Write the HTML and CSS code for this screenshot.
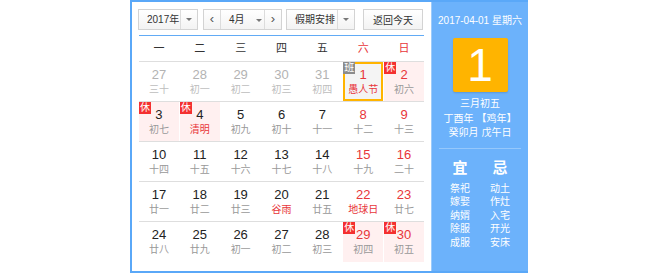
FILE: index.html
```html
<!DOCTYPE html>
<html lang="zh-CN">
<head>
    <meta charset="UTF-8">
    <meta name="viewport" content="width=device-width, initial-scale=1.0">
    <title>万年历</title>
    <link rel="stylesheet" href="styles.css">
</head>
<body>
    <div class="calendar">
        <div class="main">
            <div class="toolbar">
                <div class="select year">
                    <span class="select-text">2017年</span>
                    <span class="select-arrow"><i class="caret"></i></span>
                </div>
                <div class="month-group">
                    <span class="month-btn">&lsaquo;</span>
                    <span class="month-select">4月 <i class="caret"></i></span>
                    <span class="month-btn">&rsaquo;</span>
                </div>
                <div class="select holiday">
                    <span class="select-text">假期安排</span>
                    <span class="select-arrow"><i class="caret"></i></span>
                </div>
                <button class="today-btn">返回今天</button>
            </div>

            <div class="week-head">
                <span>一</span><span>二</span><span>三</span><span>四</span><span>五</span>
                <span class="red">六</span><span class="red">日</span>
            </div>

            <div class="days">
                <div class="week">
                    <div class="day other"><b>27</b><em>三十</em></div>
                    <div class="day other"><b>28</b><em>初一</em></div>
                    <div class="day other"><b>29</b><em>初二</em></div>
                    <div class="day other"><b>30</b><em>初三</em></div>
                    <div class="day other"><b>31</b><em>初四</em></div>
                    <div class="day today weekend"><i class="tag work">班</i><b>1</b><em class="fest">愚人节</em></div>
                    <div class="day rest weekend"><i class="tag">休</i><b>2</b><em>初六</em></div>
                </div>
                <div class="week">
                    <div class="day rest"><i class="tag">休</i><b>3</b><em>初七</em></div>
                    <div class="day rest"><i class="tag">休</i><b>4</b><em class="fest">清明</em></div>
                    <div class="day"><b>5</b><em>初九</em></div>
                    <div class="day"><b>6</b><em>初十</em></div>
                    <div class="day"><b>7</b><em>十一</em></div>
                    <div class="day weekend"><b>8</b><em>十二</em></div>
                    <div class="day weekend"><b>9</b><em>十三</em></div>
                </div>
                <div class="week">
                    <div class="day"><b>10</b><em>十四</em></div>
                    <div class="day"><b>11</b><em>十五</em></div>
                    <div class="day"><b>12</b><em>十六</em></div>
                    <div class="day"><b>13</b><em>十七</em></div>
                    <div class="day"><b>14</b><em>十八</em></div>
                    <div class="day weekend"><b>15</b><em>十九</em></div>
                    <div class="day weekend"><b>16</b><em>二十</em></div>
                </div>
                <div class="week">
                    <div class="day"><b>17</b><em>廿一</em></div>
                    <div class="day"><b>18</b><em>廿二</em></div>
                    <div class="day"><b>19</b><em>廿三</em></div>
                    <div class="day"><b>20</b><em class="fest">谷雨</em></div>
                    <div class="day"><b>21</b><em>廿五</em></div>
                    <div class="day weekend"><b>22</b><em class="fest">地球日</em></div>
                    <div class="day weekend"><b>23</b><em>廿七</em></div>
                </div>
                <div class="week last">
                    <div class="day"><b>24</b><em>廿八</em></div>
                    <div class="day"><b>25</b><em>廿九</em></div>
                    <div class="day"><b>26</b><em>初一</em></div>
                    <div class="day"><b>27</b><em>初二</em></div>
                    <div class="day"><b>28</b><em>初三</em></div>
                    <div class="day rest weekend"><i class="tag">休</i><b>29</b><em>初四</em></div>
                    <div class="day rest weekend"><i class="tag">休</i><b>30</b><em>初五</em></div>
                </div>
            </div>
        </div>

        <div class="side">
            <div class="side-date">2017-04-01 星期六</div>
            <div class="big-day">1</div>
            <div class="lunar-info">
                <p>三月初五</p>
                <p>丁酉年 【鸡年】</p>
                <p>癸卯月 戊午日</p>
            </div>
            <div class="almanac">
                <div class="almanac-col">
                    <h3>宜</h3>
                    <p>祭祀</p>
                    <p>嫁娶</p>
                    <p>纳婿</p>
                    <p>除服</p>
                    <p>成服</p>
                </div>
                <div class="almanac-col">
                    <h3>忌</h3>
                    <p>动土</p>
                    <p>作灶</p>
                    <p>入宅</p>
                    <p>开光</p>
                    <p>安床</p>
                </div>
            </div>
        </div>
    </div>
</body>
</html>
```

FILE: styles.css
```css
body {
    margin: 0;
    background-color: #fff;
    font-family: "Liberation Sans", Arial, "Noto Sans CJK SC", sans-serif;
    color: #333;
}

.calendar {
    display: flex;
    width: 398px;
    height: 273px;
    margin-left: 130px;
    border: 2px solid #5aa8f8;
    border-right: none;
    box-sizing: border-box;
}

.main {
    width: 299px;
    padding: 0 7px;
    box-sizing: border-box;
}

/* toolbar */
.toolbar {
    display: flex;
    height: 21px;
    margin: 7px 0 0 -1px;
    font-size: 10px;
    white-space: nowrap;
}

.select,
.month-group,
.today-btn {
    display: flex;
    height: 21px;
    border: 1px solid #d3d3d3;
    background: linear-gradient(#fff, #f3f3f3);
    box-sizing: border-box;
    align-items: center;
}

.select-text {
    flex: 1;
    padding-left: 8px;
    line-height: 19px;
    white-space: nowrap;
}

.select-arrow {
    display: flex;
    width: 16px;
    height: 19px;
    border-left: 1px solid #dcdcdc;
    align-items: center;
    justify-content: center;
}

.caret {
    display: inline-block;
    width: 0;
    height: 0;
    border-left: 3px solid transparent;
    border-right: 3px solid transparent;
    border-top: 3px solid #777;
    vertical-align: middle;
}

.year {
    width: 60px;
}

.month-group {
    width: 79px;
    margin-left: 5px;
}

.month-btn {
    width: 16px;
    height: 19px;
    line-height: 18px;
    text-align: center;
    font-size: 13px;
    color: #555;
}

.month-select {
    flex: 1;
    height: 19px;
    line-height: 19px;
    padding-left: 8px;
    border-left: 1px solid #dcdcdc;
    border-right: 1px solid #dcdcdc;
}

.month-select .caret {
    margin-left: 9px;
}

.holiday {
    width: 69px;
    margin-left: 4px;
}

.today-btn {
    width: 60px;
    margin-left: 8px;
    justify-content: center;
    font-family: inherit;
    font-size: 10px;
    color: #333;
    padding: 0;
}

/* weekday header */
.week-head {
    display: grid;
    grid-template-columns: repeat(7, 1fr);
    column-gap: 1px;
    height: 25px;
    margin-top: 5px;
    border-top: 1px solid #62abf5;
    border-bottom: 1px solid #dedede;
    font-size: 11px;
    line-height: 24px;
    text-align: center;
}

.red {
    color: #e8363a;
}

/* day grid */
.week {
    display: grid;
    grid-template-columns: repeat(7, 1fr);
    column-gap: 1px;
    height: 40px;
    border-bottom: 1px solid #dedede;
    box-sizing: border-box;
}

.week.last {
    border-bottom: none;
}

.day {
    position: relative;
    padding-top: 5px;
    text-align: center;
    box-sizing: border-box;
}

.day b {
    display: block;
    font-size: 13px;
    font-weight: normal;
    line-height: 16px;
    color: #222;
}

.day em {
    display: block;
    font-style: normal;
    font-size: 10px;
    line-height: 14px;
    color: #999;
}

.day.weekend b {
    color: #e8363a;
}

.day em.fest {
    color: #e8363a;
}

.day.other b {
    color: #b3b3b3;
}

.day.other em {
    color: #bdbdbd;
}

.day.rest {
    background-color: #fff0f0;
}

.day.today {
    padding-top: 3px;
    border: 2px solid #ffb400;
    background-color: #f4f4f4;
}

.tag {
    position: absolute;
    top: 0;
    left: 0;
    width: 12px;
    height: 12px;
    background-color: #f43030;
    color: #fff;
    font-style: normal;
    font-size: 10px;
    line-height: 12px;
    text-align: center;
}

.tag.work {
    top: -2px;
    left: -2px;
    background-color: #8c8c8c;
}

/* right panel */
.side {
    flex: 1;
    background-color: #6cb2fb;
    border-left: 1px solid #9ccbfb;
    color: #fff;
    text-align: center;
}

.side-date {
    margin-top: 12px;
    font-size: 10px;
    line-height: 14px;
}

.big-day {
    width: 55px;
    height: 54px;
    margin: 10px auto 0;
    background-color: #ffb400;
    border-radius: 2px;
    box-shadow: 0 1px 2px rgba(0, 0, 0, 0.15);
    font-size: 46px;
    line-height: 54px;
}

.lunar-info {
    margin-top: 5px;
    padding-bottom: 7px;
    margin-left: 7px;
    margin-right: 7px;
    border-bottom: 1px solid #95c8fc;
}

.lunar-info p {
    margin: 0;
    font-size: 10px;
    line-height: 14.5px;
}

.almanac {
    display: flex;
    justify-content: center;
    gap: 20px;
    margin-top: 10px;
}

.almanac-col h3 {
    margin: 0 0 5px;
    font-size: 15px;
    font-weight: bold;
    line-height: 18px;
}

.almanac-col p {
    margin: 0;
    font-size: 10px;
    line-height: 13.5px;
}
```
